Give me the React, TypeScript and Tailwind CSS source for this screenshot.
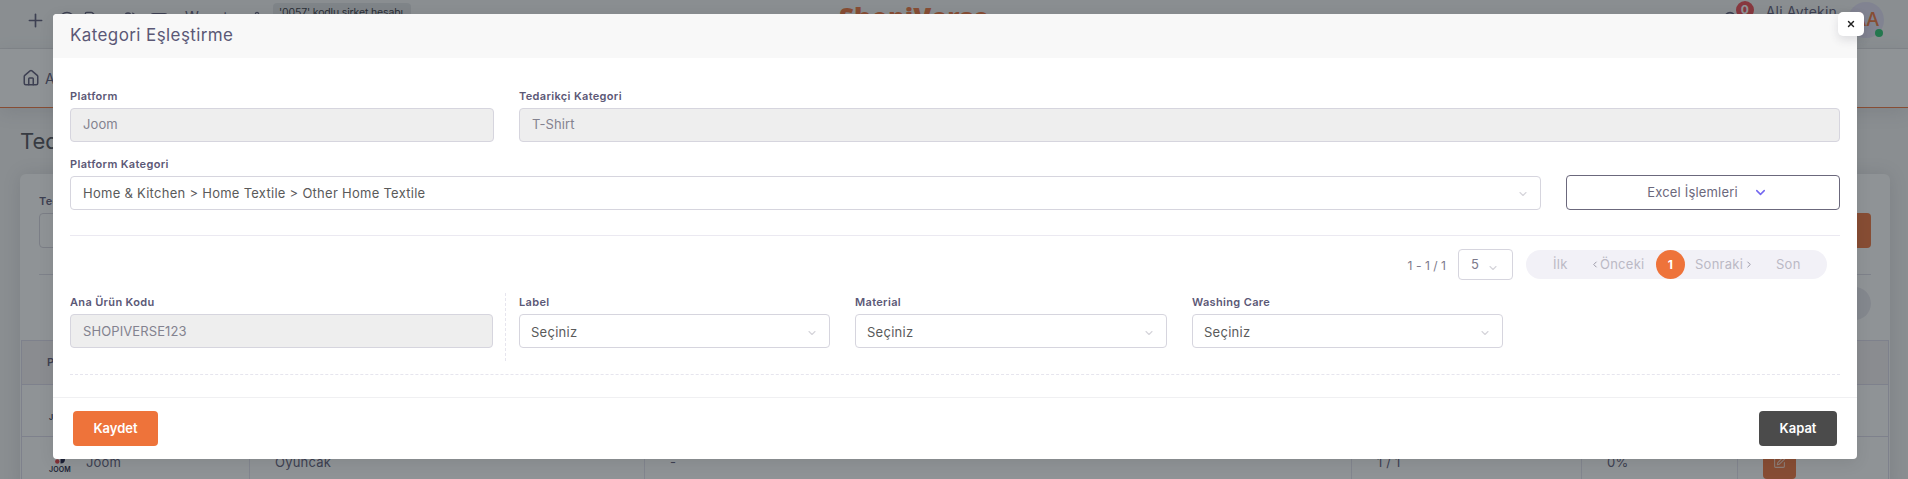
import React from "react";
import {
  Bell,
  ChevronDown,
  ChevronLeft,
  ChevronRight,
  CircleUser,
  CreditCard,
  House,
  Plus,
  Settings,
  SquarePen,
  Tag,
  Users,
  X,
} from "lucide-react";

function Label({ children }: { children: React.ReactNode }) {
  return (
    <div className="h-[13px] whitespace-nowrap text-[11px] font-[560] leading-[13px] tracking-[0.34px] text-[#5b5876]">
      {children}
    </div>
  );
}

function Field({ label, value, pad = "pt-0" }: { label: string; value: string; pad?: string }) {
  return (
    <div className="min-w-0">
      <Label>{label}</Label>
      <div
        className={
          "mt-[5px] flex h-[34px] items-center rounded border border-[#d6d5de] bg-[#eeeeee] px-[12px] text-[13px] tracking-[0.1px] text-[#83828f] " +
          pad
        }
      >
        {value}
      </div>
    </div>
  );
}

function Select({ label, value, pad = "pl-[11px] pt-[3px]" }: { label: string; value: string; pad?: string }) {
  return (
    <div className="min-w-0">
      <Label>{label}</Label>
      <div
        className={
          "mt-[5px] flex h-[34px] items-center justify-between rounded border border-[#d6d5de] bg-white pr-[11px] text-[13px] tracking-[0.27px] text-[#5a5a5a] " +
          pad
        }
      >
        <span>{value}</span>
        <ChevronDown className="h-[12px] w-[12px] text-[#d5d4da]" strokeWidth={2.2} />
      </div>
    </div>
  );
}

function JoomLogo() {
  return (
    <div className="flex w-[24px] flex-col items-center">
      <svg className="h-[14px] w-[12px]" viewBox="0 0 12 14">
        <path d="M6.5 2H11v6q0 4.500-4.500 4.500z" fill="#17163a" />
        <circle cx="3.300" cy="10.500" r="2.200" fill="#e5393f" />
      </svg>
      <span className="mt-[1px] text-[7px] font-semibold leading-[8px] text-[#17163a]">JOOM</span>
    </div>
  );
}

function TableRow({ category, height }: { category: string; height: string }) {
  return (
    <div
      className={
        "grid grid-cols-[228px_395px_707px_230px_156px_1fr] border-b border-[#dcdbea] text-[13px] tracking-[0.2px] text-[#5b5876] " +
        height
      }
    >
      <div className="flex items-center gap-[14px] border-r border-[#e4e3ee] pl-[26px]">
        <JoomLogo />
        <span>Joom</span>
      </div>
      <div className="flex items-center border-r border-[#e4e3ee] pl-[25px]">{category}</div>
      <div className="flex items-center border-r border-[#e4e3ee] pl-[25px]">-</div>
      <div className="flex items-center border-r border-[#e4e3ee] pl-[25px]">1 / 1</div>
      <div className="flex items-center border-r border-[#e4e3ee] pl-[25px]">0%</div>
      <div className="flex items-center pl-[25px]">
        <div className="flex h-[33px] w-[33px] items-center justify-center rounded bg-[#ee733a] text-white/70">
          <SquarePen className="h-[13px] w-[13px]" />
        </div>
      </div>
    </div>
  );
}

function Backdrop() {
  return (
    <div className="flex h-full flex-col">
      <header className="flex h-[49px] shrink-0 items-start border-b border-[#e2e2e5] bg-[#f4f5f5]">
        <div className="flex w-[839px] shrink-0 items-start pl-[25px]">
          <Plus className="mt-[10px] h-[21px] w-[21px]" strokeWidth={1.9} />
          <CircleUser className="ml-[13px] mt-[11px] h-[16px] w-[16px]" />
          <Tag className="ml-[9px] mt-[11px] h-[16px] w-[16px]" />
          <Users className="ml-[22px] mt-[11px] h-[16px] w-[16px]" />
          <CreditCard className="ml-[12px] mt-[10px] h-[18px] w-[18px]" />
          <span className="ml-[17px] mt-[8px] w-[42px] text-[14px] leading-[18px]">Wooot</span>
          <Settings className="ml-[22px] mt-[11px] h-[16px] w-[16px]" />
          <div className="ml-[8px] mt-[3px] h-[22px] w-[138px] whitespace-nowrap rounded bg-[#dfe1e3] pl-[6px] text-[10.5px] leading-[19px] tracking-[-0.15px] text-[#33343d]">
            '0057' kodlu şirket hesabı
          </div>
        </div>
        <div className="whitespace-nowrap pt-[2px] font-['Open_Sans',sans-serif] text-[26px] font-extrabold leading-[30px] text-[#ee733a]">
          ShopiVerse
        </div>
        <div className="flex flex-1 items-start justify-end pr-[24px]">
          <div className="relative mr-[12px]">
            <Bell className="mr-[14px] mt-[11px] h-[20px] w-[20px]" />
            <div className="absolute right-0 top-0 mt-px flex h-[18px] w-[18px] items-center justify-center rounded-full bg-[#ef4850] text-[12px] font-bold text-white">
              0
            </div>
          </div>
          <span className="mr-[11px] mt-[3px] whitespace-nowrap text-[14px] leading-[18px] tracking-[0.2px]">
            Ali Aytekin
          </span>
          <div className="relative mt-[2px] flex h-[36px] w-[36px] items-center justify-center rounded-full bg-[#e2dff5] text-[19px] font-medium tracking-[-0.5px] text-[#ee733a]">
            AA
            <i className="absolute bottom-[1px] right-[1px] h-[8px] w-[8px] rounded-full bg-[#28c76f]" />
          </div>
        </div>
      </header>
      <nav className="flex h-[59px] shrink-0 items-center gap-[5px] border-b border-[#ee733a] bg-white pl-[22px] text-[14px] shadow-[0_4px_18px_rgba(60,60,80,0.12)]">
        <House className="h-[18px] w-[18px]" strokeWidth={2} />
        <span className="whitespace-nowrap">Ana</span>
      </nav>
      <h1 className="mt-[19px] h-[28px] shrink-0 pl-[20px] text-[22px] leading-[28px] text-[#4e4e56]">Tedarikçi</h1>
      <section className="ml-[20px] mr-[18px] mt-[19px] flex-1 rounded-t-md bg-white pr-px shadow-[0_0_18px_rgba(60,60,80,0.14)]">
        <div className="pl-[19px] pr-[18px] pt-[21px]">
          <Label>Tedarikçi</Label>
          <div className="mt-[5px] flex h-[35px] justify-between">
            <div className="w-[400px] rounded border border-[#d6d5de]" />
            <div className="w-[120px] rounded bg-[#ee733a]" />
          </div>
          <div className="mt-[26px] h-px bg-[#dddce6]" />
          <div className="ml-auto mt-[12px] h-[33px] w-[300px] rounded-full bg-[#e9e8ef]" />
        </div>
        <div className="ml-px mt-[20px] border-x border-[#dcdbea]">
          <div className="flex h-[45px] items-center border-y border-[#dcdbea] bg-[#f4f0f3] pl-[25px] text-[11px] font-semibold">
            PLATFORM
          </div>
          <TableRow category="Giyim" height="h-[52px]" />
          <TableRow category="Oyuncak" height="h-[52px]" />
        </div>
      </section>
    </div>
  );
}

function Pager() {
  return (
    <div className="mr-[13px] flex h-[31px] items-center justify-end text-[13px] text-[#7c7a8b]">
      <span className="mr-[12px] whitespace-nowrap pt-[2px] text-[12px] tracking-[0.05px]">1 - 1 / 1</span>
      <div className="mr-[13px] flex h-[31px] w-[55px] items-center justify-between rounded border border-[#d6d5de] pl-[12px] pr-[13px]">
        <span>5</span>
        <ChevronDown className="mt-[6px] h-[12px] w-[12px] text-[#d5d4da]" strokeWidth={2.2} />
      </div>
      <div className="flex h-[29px] w-[301px] items-center rounded-full bg-[#f2f1f7] tracking-[0.25px] text-[#bbb9c5]">
        <span className="ml-[27px] w-[37px]">İlk</span>
        <ChevronLeft className="h-[13px] w-[10px] text-[#9c9aa8]" strokeWidth={2.4} />
        <span className="w-[56px] whitespace-nowrap">Önceki</span>
        <span className="flex h-[29px] w-[29px] items-center justify-center rounded-full bg-[#ee733a] text-[12px] font-bold text-white">
          1
        </span>
        <span className="ml-[10px] w-[49px] whitespace-nowrap">Sonraki</span>
        <ChevronRight className="h-[13px] w-[10px] text-[#9c9aa8]" strokeWidth={2.4} />
        <span className="ml-[22px]">Son</span>
      </div>
    </div>
  );
}

function MatchDialog() {
  return (
    <div className="relative flex h-[445px] w-[1804px] flex-col rounded bg-white shadow-[0_4px_16px_rgba(0,0,0,0.08)]">
      <button className="absolute -right-[7px] -top-[2px] flex h-[24px] w-[26px] items-center justify-center rounded-[5px] bg-white pb-px text-[#222222] shadow-[0_4px_10px_rgba(60,60,80,0.14)]">
        <X className="h-[10px] w-[10px]" strokeWidth={3.4} />
      </button>
      <div className="h-[44px] rounded-t bg-[#f8f8f8] pl-[17px] text-[17px] leading-[43px] tracking-[0.4px] text-[#5b5876]">
        Kategori Eşleştirme
      </div>
      <div className="flex flex-1 flex-col px-[17px] pt-[32px]">
        <div className="grid grid-cols-[424px_1fr] gap-[25px]">
          <Field label="Platform" value="Joom" />
          <Field label="Tedarikçi Kategori" value="T-Shirt" />
        </div>
        <div className="mt-[16px] grid grid-cols-[1fr_274px] items-end gap-[25px]">
          <Select
            label="Platform Kategori"
            value="Home & Kitchen > Home Textile > Other Home Textile"
            pad="pl-[12px] pt-[2px]"
          />
          <button className="flex h-[35px] items-center justify-center gap-[15px] rounded border border-[#6b687c] pl-[9px] text-[13px] tracking-[0.18px] text-[#6b687c]">
            Excel İşlemleri
            <ChevronDown className="h-[15px] w-[15px] text-[#7367f0]" strokeWidth={2.4} />
          </button>
        </div>
        <div className="mb-[13px] mt-[25px] h-px bg-[#ebe9f1]" />
        <Pager />
        <div className="mt-[13px] flex">
          <div className="w-[436px] border-r border-dashed border-[#e6e5ee] pb-[13px] pr-[12px] pt-[3px]">
            <Field label="Ana Ürün Kodu" value="SHOPIVERSE123" pad="pt-[2px]" />
          </div>
          <div className="ml-[13px] grid grid-cols-[311px_312px_311px] gap-[25px] pt-[3px]">
            <Select label="Label" value="Seçiniz" />
            <Select label="Material" value="Seçiniz" />
            <Select label="Washing Care" value="Seçiniz" />
          </div>
        </div>
        <div className="mt-[13px] border-t border-dashed border-[#e6e5ee]" />
      </div>
      <div className="flex h-[62px] items-center justify-between border-t border-[#f0f0f2] pl-[20px] pr-[20px] text-[13px] font-semibold text-white">
        <button className="h-[35px] w-[85px] rounded bg-[#ee733a]">Kaydet</button>
        <button className="h-[35px] w-[78px] rounded bg-[#4b4b4b]">Kapat</button>
      </div>
    </div>
  );
}

export default function App() {
  return (
    <div className="relative h-[479px] w-full overflow-hidden bg-[#f4f4f4] font-['Inter',sans-serif] text-[#5b5876]">
      <Backdrop />
      <div className="absolute inset-0 flex justify-center bg-[rgba(32,39,46,0.5)] pl-[2px] pt-[14px]">
        <MatchDialog />
      </div>
    </div>
  );
}
